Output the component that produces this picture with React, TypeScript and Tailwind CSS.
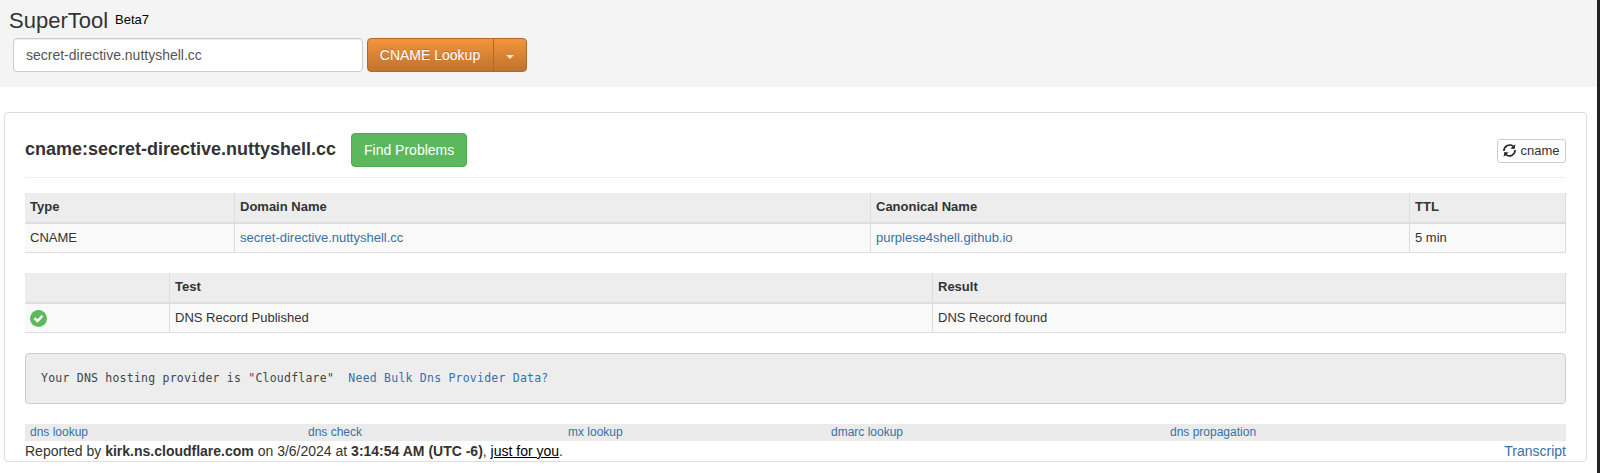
import type { ReactNode } from "react";

function Th({ children }: { children?: ReactNode }) {
  return (
    <th className="h-[31px] border-b-2 border-r border-[#ddd] bg-[#ededed] px-[5px] pb-[2px] text-left font-bold">
      {children}
    </th>
  );
}

function Td({ children }: { children?: ReactNode }) {
  return (
    <td className="h-[29px] border-b border-r border-[#ddd] bg-[#f9f9f9] px-[5px] py-0">
      {children}
    </td>
  );
}

function Table({ widths, head, row }: { widths: number[]; head: string[]; row: ReactNode[] }) {
  return (
    <table className="w-[1541px] table-fixed border-separate border-spacing-0 text-[13px] leading-[18px]">
      <colgroup>
        {widths.map((w, i) => (
          <col key={i} style={{ width: w }} />
        ))}
      </colgroup>
      <thead>
        <tr>
          {head.map((h, i) => (
            <Th key={i}>{h}</Th>
          ))}
        </tr>
      </thead>
      <tbody>
        <tr>
          {row.map((c, i) => (
            <Td key={i}>{c}</Td>
          ))}
        </tr>
      </tbody>
    </table>
  );
}

function RefreshIcon() {
  return (
    <svg className="mb-[2px]" width="13" height="13" viewBox="0 0 13 13" fill="none" stroke="#222" strokeWidth="1.6">
      <path d="M0.9 7 C0.9 2.4 6 -0.7 10.3 2.3" />
      <path d="M12.1 6 C12.1 10.6 7 13.7 2.7 10.7" />
      <path d="M12.4 0.2 L11.6 5 L7.4 4.4Z" fill="#222" stroke="none" />
      <path d="M0.6 12.8 L1.4 8 L5.6 8.6Z" fill="#222" stroke="none" />
    </svg>
  );
}

function OkIcon() {
  return (
    <svg className="mt-[1px] block" width="17" height="17" viewBox="0 0 17 17">
      <circle cx="8.5" cy="8.5" r="8.5" fill="#5cb85c" />
      <path d="M4.4 8.2 L7.4 11 L12.4 5.8" fill="none" stroke="#fff" strokeWidth="2.4" />
    </svg>
  );
}

const link = "text-[#3a70a6]";

export default function App() {
  return (
    <div className="flex h-[473px] w-[1600px] overflow-hidden bg-white font-['Liberation_Sans',Arial,sans-serif] text-[14px] leading-5 text-[#333]">
      <div className="flex w-[1597px] flex-col">
        <header className="h-[87px] bg-[#f4f4f4] pt-[8px]">
          <h1 className="flex h-[30px] items-start pl-[9px]">
            <span className="text-[22px] leading-[25px]">SuperTool</span>
            <span className="pl-[7px] text-[13px] leading-[23px] text-black">Beta7</span>
          </h1>
          <div className="flex pl-[13px]">
            <input
              type="text"
              defaultValue="secret-directive.nuttyshell.cc"
              className="h-[34px] w-[350px] rounded border border-[#ccc] bg-white px-3 text-[14px] text-[#555] shadow-[inset_0_1px_1px_rgba(0,0,0,0.075)]"
            />
            <div className="ml-[4px] flex h-[34px] w-[160px] overflow-hidden rounded border border-[#b0692a] bg-linear-to-b from-[#f3953b] to-[#bf732e] text-white">
              <button className="w-[125px] pb-px pr-px [text-shadow:0_-1px_0_rgba(0,0,0,0.2)]">CNAME Lookup</button>
              <button className="flex flex-1 items-center justify-center border-l border-[#b0692a] pr-px pt-[4px]">
                <span className="border-x-4 border-t-4 border-x-transparent border-t-[#fbe3cd]" />
              </button>
            </div>
          </div>
        </header>

        <main className="ml-[4px] mt-[25px] h-[350px] w-[1583px] rounded border border-[#ddd] px-[20px] pt-[20px]">
          <div className="flex h-[45px] w-[1541px] items-start border-b border-[#eee]">
            <h4 className="text-[18px] font-bold leading-[32px]">cname:secret-directive.nuttyshell.cc</h4>
            <button className="ml-[15px] h-[34px] w-[116px] rounded border border-[#4cae4c] bg-[#5cb85c] text-white">
              Find Problems
            </button>
            <button className="ml-auto mt-[6px] flex h-[24px] w-[69px] items-center justify-center gap-[4px] rounded-[3px] border border-[#ccc] bg-white text-[13px]">
              <RefreshIcon />
              cname
            </button>
          </div>

          <div className="mt-[15px]">
            <Table
              widths={[210, 636, 539, 156]}
              head={["Type", "Domain Name", "Canonical Name", "TTL"]}
              row={[
                "CNAME",
                <a className={link}>secret-directive.nuttyshell.cc</a>,
                <a className={link}>purplese4shell.github.io</a>,
                "5 min",
              ]}
            />
          </div>
          <div className="mt-[20px]">
            <Table
              widths={[145, 763, 633]}
              head={["", "Test", "Result"]}
              row={[<OkIcon />, "DNS Record Published", "DNS Record found"]}
            />
          </div>

          <pre className="mt-[20px] flex h-[51px] w-[1541px] items-center rounded border border-[#ccc] bg-[#ededed] px-[15px] pb-[2px] font-['DejaVu_Sans_Mono',monospace] text-[11.5px] tracking-[0.224px] text-[#444]">
            {'Your DNS hosting provider is "Cloudflare"  '}
            <a className={link}>Need Bulk Dns Provider Data?</a>
          </pre>

          <nav className="mt-[20px] flex h-[17px] w-[1541px] bg-[#ebebeb] pl-[5px] text-[12px] leading-[16px] text-[#3a70a6]">
            <a className="w-[278px]">dns lookup</a>
            <a className="w-[260px]">dns check</a>
            <a className="w-[263px]">mx lookup</a>
            <a className="w-[339px]">dmarc lookup</a>
            <a>dns propagation</a>
          </nav>
          <footer className="flex w-[1541px] justify-between">
            <span>
              Reported by <b>kirk.ns.cloudflare.com</b> on 3/6/2024 at <b>3:14:54 AM (UTC -6)</b>,{" "}
              <span className="text-black underline">just for you</span>.
            </span>
            <a className={link}>Transcript</a>
          </footer>
        </main>
      </div>
      <div className="w-[3px] bg-[#222]" />
    </div>
  );
}
